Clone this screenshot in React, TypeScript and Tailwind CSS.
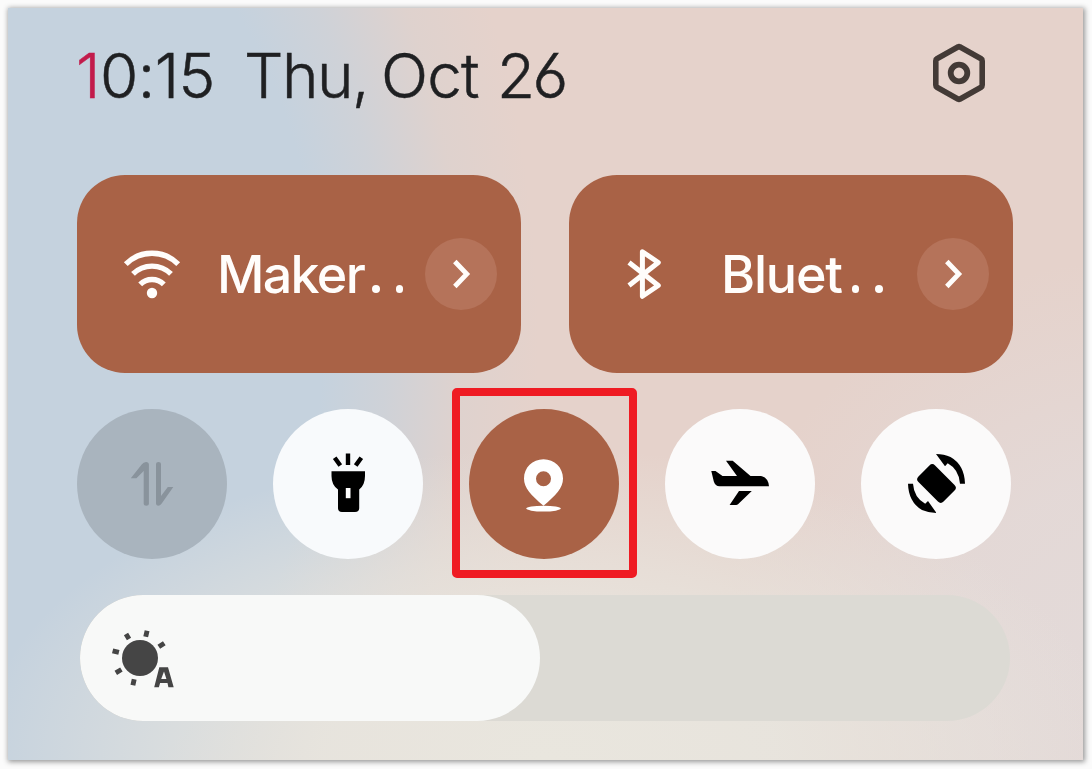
import type { ReactNode } from 'react';

function WifiIcon() {
  return (
    <svg width="60" height="52" viewBox="0 0 60 52" fill="none" stroke="#fffdfb" strokeWidth="5.4">
      <path d="M3.8 16.1 A37 37 0 0 1 56.2 16.1" />
      <path d="M11 25.9 A27 27 0 0 1 49 25.9" />
      <path d="M18.2 36.4 A16.5 16.5 0 0 1 41.8 36.4" />
      <circle cx="30" cy="45" r="5.2" fill="#fffdfb" stroke="none" />
    </svg>
  );
}

function BluetoothIcon() {
  return (
    <svg width="40" height="54" viewBox="0 0 40 54" fill="none" stroke="#fffdfb" strokeWidth="5" strokeLinejoin="round">
      <path d="M5 15.5 L34.3 38.5 L18.4 49.3 V4.7 L34.3 15.5 L5 38.5" />
    </svg>
  );
}

function Chevron() {
  return (
    <span className="flex h-[72px] w-[72px] shrink-0 items-center justify-center rounded-full bg-[#b5735a]">
      <svg width="24" height="32" viewBox="0 0 24 32" fill="none" stroke="#fffdfb" strokeWidth="4.8">
        <path d="M5.8 3.5 L17.8 16 L5.8 28.5" />
      </svg>
    </span>
  );
}

function Dots() {
  return (
    <span className="mb-[-1px] flex gap-[16px]">
      <i className="h-[7.6px] w-[7.6px] rounded-full bg-[#fffdfb]" />
      <i className="h-[7.6px] w-[7.6px] rounded-full bg-[#fffdfb]" />
    </span>
  );
}

function Tile({ icon, label }: { icon: ReactNode; label: ReactNode }) {
  return (
    <button className="flex h-[198px] w-[444px] items-center rounded-[48px] bg-[#a96246] pr-6 pl-[44px]">
      <span className="flex w-[62px] shrink-0 justify-center">{icon}</span>
      {label}
      <span className="ml-auto flex">
        <Chevron />
      </span>
    </button>
  );
}

function Toggle({ tone, children }: { tone: string; children: ReactNode }) {
  return <button className={`flex h-[150px] w-[150px] items-center justify-center rounded-full ${tone}`}>{children}</button>;
}

function Icon90({ children, viewBox = '0 0 90 90' }: { children: ReactNode; viewBox?: string }) {
  return (
    <svg width="90" height="90" viewBox={viewBox}>
      {children}
    </svg>
  );
}

export default function App() {
  return (
    <div className="h-[769px] w-[1092px] bg-[#fbfbfb] px-2 pt-2 font-['Inter',sans-serif]">
      <main className="relative flex h-[752px] w-[1075px] flex-col bg-[#e5d2cb] bg-[radial-gradient(ellipse_570px_310px_at_540px_750px,#e9e6de_0%,#e8e5deee_40%,#e8e5de99_65%,#e8e5de00_100%),radial-gradient(ellipse_420px_400px_at_1130px_650px,#e3dad9_0%,#e3dad9cc_45%,#e3dad900_100%),radial-gradient(ellipse_540px_800px_at_-10px_330px,#c5d2de_0%,#c5d2de_60%,#c9d2dbcc_72%,#d5d2d266_86%,#e5d2cb00_100%)] shadow-[1px_1px_5px_1px_#999]">
        <header className="flex h-[167px] items-start pr-[96px] pl-[68px]">
          <h1 className="flex pt-[30px] text-[62px] leading-[75px] font-[350] whitespace-pre text-[#1f2022] [font-feature-settings:'cv03'] [-webkit-text-stroke:0.5px]">
            <span className="w-[168px] tracking-[-0.5px]">
              <span className="text-[#c21b4b]">1</span>0:15
            </span>
            <span className="w-[137px] tracking-[-1.5px]">Thu,</span>
            <span className="w-[116px] tracking-[-0.8px]">Oct</span>
            <span className="tracking-[-2.5px]">26</span>
          </h1>
          <svg className="mt-[34px] ml-auto" width="56" height="62" viewBox="0 0 56 62" fill="none" stroke="#433a36" strokeWidth="5.6" strokeLinejoin="round">
            <path d="M27.3 4.8 Q28 4.3 28.7 4.8 L50.1 16.8 Q51.2 17.4 51.2 19 V43 Q51.2 44.6 50.1 45.2 L28.7 57.2 Q28 57.7 27.3 57.2 L5.9 45.2 Q4.8 44.6 4.8 43 V19 Q4.8 17.4 5.9 16.8 Z" />
            <circle cx="28" cy="31" r="8.3" strokeWidth="5.8" />
          </svg>
        </header>

        <section className="flex gap-12 pl-[69px]">
          <Tile
            icon={<WifiIcon />}
            label={
              <span className="mt-[2px] ml-[34px] flex items-baseline gap-[8px] text-[52px] leading-[64px] font-[450] tracking-[-1.7px] text-[#fffdfb]">
                Maker
                <Dots />
              </span>
            }
          />
          <Tile
            icon={<BluetoothIcon />}
            label={
              <span className="mt-[2px] ml-[46px] flex items-baseline gap-[10px] text-[52px] leading-[64px] font-[450] tracking-[-1.2px] text-[#fffdfb]">
                Bluet
                <Dots />
              </span>
            }
          />
        </section>

        <section className="mt-9 flex gap-[46px] pl-[69px]">
          <Toggle tone="bg-[#a9b4be]">
            <Icon90 viewBox="-3 -1 90 90">
              <path d="M33.7 31 L26.4 38.2 H20.8 L31.7 24.5 Q33.5 22 36 22 Q38.9 22 38.9 24.5 V64 Q38.9 65.8 36.3 65.8 Q33.7 65.8 33.7 64 Z M48.5 22 Q51 22 51 24 V56 L57.8 47 H63.3 L51.7 63.5 Q50 65.8 48 65.7 Q46 65.4 46 63.5 V24 Q46 22 48.5 22 Z" fill="#89939c" />
            </Icon90>
          </Toggle>
          <Toggle tone="bg-[#f8fafc]">
            <Icon90 viewBox="3 -1 90 90">
              <path d="M31.5 31.3 H65 V36 Q65 45 59.2 49.5 V68 Q59.2 72 55 72 H42 Q38 72 38 68 V49.5 Q31.5 45 31.5 36 Z" fill="#000" />
              <rect x="45.8" y="48" width="4.7" height="10.2" fill="#fff" />
              <path d="M48 13.5 V25 M34.7 17.7 L40.3 25.6 M61.3 17.7 L55.7 25.6" stroke="#000" strokeWidth="4.4" />
            </Icon90>
          </Toggle>
          <Toggle tone="bg-[#a96246]">
            <Icon90>
              <path fillRule="evenodd" d="M44.5 20.2 C55.5 20.2 64 28.5 64 39.5 C64 49 57 56 44.5 66.8 C32 56 25 49 25 39.5 C25 28.5 33.5 20.2 44.5 20.2 Z M44.5 32.3 A7.5 7.5 0 1 0 44.5 47.3 A7.5 7.5 0 1 0 44.5 32.3 Z" fill="#fff" />
              <ellipse cx="44.5" cy="69.6" rx="17.3" ry="2.9" fill="#fff" />
            </Icon90>
          </Toggle>
          <Toggle tone="bg-[#fbfafa]">
            <Icon90 viewBox="0 -1 90 90">
              <path d="M16.3 31 H20.5 L27.5 35.9 H42 L31 20.7 H37.7 L55.5 35.9 H66 Q73.3 37.5 74 46.3 H24.5 Q20.2 46 18.8 41.5 Z M44 51 H56.8 L43 64.2 Q42.2 65 41.2 65 H34.6 Z" fill="#000" />
            </Icon90>
          </Toggle>
          <Toggle tone="bg-[#fbfafa]">
            <Icon90 viewBox="1 -1 90 90">
              <rect x="28.75" y="31.75" width="35.5" height="23.5" rx="4" transform="rotate(45 46.5 43.5)" fill="#000" />
              <path d="M46 14 Q54 14 60.5 17 Q74.5 25 75 43.7 H70 Q69 29.5 57.7 23.3 L55 26.3 Z M46.5 73 Q39 73 32 70 Q18.5 62 18 43.7 H23 Q24 57.5 35.2 63.8 L38 61 Z" fill="#000" />
            </Icon90>
          </Toggle>
        </section>

        <div className="mt-9 ml-[72px] flex h-[126px] w-[930px] overflow-hidden rounded-full bg-[#dcdad4]">
          <div className="flex w-[460px] items-center rounded-full bg-[#f8f9f8]">
            <svg className="ml-[28px]" width="70" height="70" viewBox="0 0 70 70" fill="#454545">
              <circle cx="32" cy="35" r="18" />
              <path d="M18 11 L21 16 M39.1 7.7 L37.7 13.7 M56.3 20.2 L50.8 23.8 M4.6 27.8 L10.9 29.4 M7.8 49.8 L13.4 46.5 M24.9 62.3 L26.2 56.2" stroke="#454545" strokeWidth="4.9" />
              <path fillRule="evenodd" d="M51.3 44.3 H60 L65.7 64.3 H60.4 L59.5 60 H52.1 L50.9 64.3 H46.2 Z M53.2 56 H58.4 L56 48.5 Z" />
            </svg>
          </div>
        </div>
        <div className="absolute top-[380px] left-[444px] h-[190px] w-[185px] rounded-[5px] border-8 border-[#ef1b23]" />
      </main>
    </div>
  );
}
